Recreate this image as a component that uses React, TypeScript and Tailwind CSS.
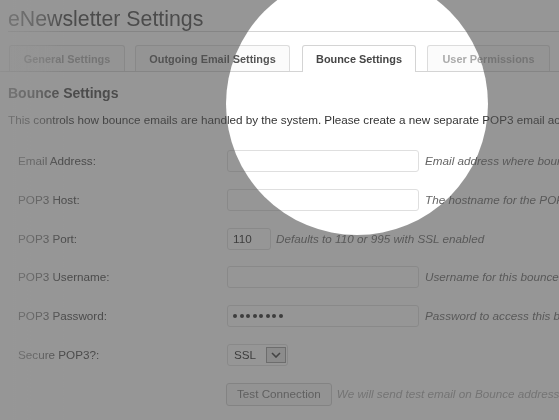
import React from "react";

function Dots() {
  return (
    <div className="flex items-center gap-[2.5px]">
      {[0, 1, 2, 3, 4, 5, 6, 7].map((i) => (
        <div key={i} className="w-[4px] h-[4px] rounded-full bg-[#222]" />
      ))}
    </div>
  );
}

function Row({ label, children, hint, hintClass }: { label: string; children: React.ReactNode; hint?: string; hintClass?: string }) {
  return (
    <div className="flex items-center h-[22px] whitespace-nowrap">
      <div className="w-[209px] shrink-0 text-[#444]">{label}</div>
      {children}
      {hint && <div className={"italic text-[#666] " + (hintClass ?? "ml-[6px]")}>{hint}</div>}
    </div>
  );
}

export default function App() {
  const input = "h-[22px] border border-[#dfdfdf] rounded-[3px] bg-white shrink-0";
  return (
    <div className="relative w-[559px] h-[420px] overflow-hidden bg-white font-['Liberation_Sans',Arial,sans-serif] text-[11.7px] leading-[14px]">
      <div className="ml-2 pt-[7px] border-b border-[#d4d4d4]">
        <h2 className="text-[21.3px] leading-[24px] text-[#464646] font-normal">eNewsletter Settings</h2>
      </div>
      <div className="mt-[13px] flex items-end gap-[10px] pl-[9px] border-b border-[#d4d4d4] whitespace-nowrap text-[10.9px] font-bold">
        <div className="h-[26px] w-[116px] justify-center flex items-center border border-b-0 border-[#dcdcdc] rounded-t-[3px] bg-[#fbfbfb] text-[#aaa]">General Settings</div>
        <div className="h-[26px] w-[155px] justify-center flex items-center border border-b-0 border-[#dcdcdc] rounded-t-[3px] bg-[#fbfbfb] text-[#555]">Outgoing Email Settings</div>
        <div className="h-[27px] w-[114px] ml-[2px] justify-center -mb-px pb-px flex items-center border border-b-0 border-[#d4d4d4] rounded-t-[3px] bg-white text-[#464646]">Bounce Settings</div>
        <div className="h-[26px] w-[123px] ml-px justify-center flex items-center border border-b-0 border-[#dcdcdc] rounded-t-[3px] bg-[#fbfbfb] text-[#aaa]">User Permissions</div>
      </div>
      <div className="px-2">
        <h3 className="mt-[13px] text-[14px] leading-[16px] font-bold text-[#464646]">Bounce Settings</h3>
        <p className="mt-[12px] whitespace-nowrap text-[#333]">
          This controls how bounce emails are handled by the system. Please create a new separate POP3 email account for bounce emails.
        </p>
        <div className="mt-[23px] pl-[10px] flex flex-col gap-[16.8px]">
          <Row label="Email Address:" hint="Email address where bounce emails will be sent">
            <div className={input + " w-[192px]"} />
          </Row>
          <Row label="POP3 Host:" hint="The hostname for the POP3 account, eg: pop.example.com">
            <div className={input + " w-[192px]"} />
          </Row>
          <Row label="POP3 Port:" hint="Defaults to 110 or 995 with SSL enabled" hintClass="ml-[5px]">
            <div className={input + " w-[44px] flex items-center pl-[5px] text-[#222]"}>110</div>
          </Row>
          <Row label="POP3 Username:" hint="Username for this bounce email account">
            <div className={input + " w-[192px]"} />
          </Row>
          <Row label="POP3 Password:" hint="Password to access this bounce email account">
            <div className={input + " w-[192px] flex items-center pl-[5px]"}>
              <Dots />
            </div>
          </Row>
          <Row label="Secure POP3?:">
            <div className={input + " w-[61px] flex items-center justify-between pl-[6px] pr-[1px] text-[#222]"}>
              <span>SSL</span>
              <div className="w-[20px] h-[16px] border border-[#9a9a9a] bg-[#e6e6e6] flex items-center justify-center">
                <svg width="10" height="6" viewBox="0 0 10 6">
                  <path d="M1 1 L5 5 L9 1" fill="none" stroke="#333" strokeWidth="1.6" />
                </svg>
              </div>
            </div>
          </Row>
          <div className="flex items-center h-[23px] whitespace-nowrap">
            <div className="w-[208px] shrink-0" />
            <div className="h-[23px] px-[10px] flex items-center border border-[#cfcfcf] rounded-[3px] bg-[#f7f7f7] text-[#777]">Test Connection</div>
            <div className="ml-[5px] italic text-[#aaa]">We will send test email on Bounce address and will try to read it</div>
          </div>
        </div>
      </div>
      <div className="absolute left-[226px] top-[-27px] w-[262px] h-[262px] rounded-full pointer-events-none shadow-[0_0_0_1200px_rgba(80,80,80,0.6)]" />
      <div className="absolute left-0 top-0 w-[70px] h-[420px] pointer-events-none mix-blend-lighten bg-[linear-gradient(to_right,rgba(150,150,150,0.6),rgba(150,150,150,0.35)_40px,rgba(150,150,150,0)_65px)]" />
    </div>
  );
}
